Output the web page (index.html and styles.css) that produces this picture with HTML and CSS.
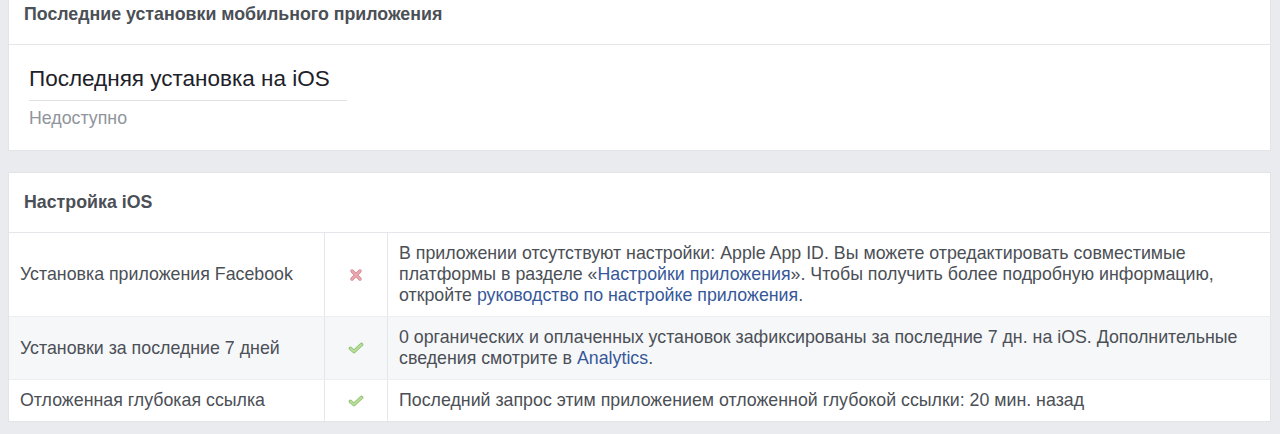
FILE: index.html
```html
<!DOCTYPE html>
<html lang="ru">
<head>
<meta charset="utf-8">
<link rel="stylesheet" href="styles.css">
</head>
<body>
<section class="card card-top">
  <div class="card-head card-head-top">Последние установки мобильного приложения</div>
  <div class="card-body">
    <div class="stat-title">Последняя установка на iOS</div>
    <div class="stat-value">Недоступно</div>
  </div>
</section>

<section class="card card-ios">
  <div class="card-head">Настройка iOS</div>
  <div class="grid">
    <div class="row">
      <div class="cell name">Установка приложения Facebook</div>
      <div class="cell icon">
        <svg width="14" height="14" viewBox="0 0 14 14"><path d="M3 3 L11 11 M11 3 L3 11" stroke="#d4848e" stroke-width="3.4" stroke-linecap="round"/><path d="M3 3 L11 11 M11 3 L3 11" stroke="#eaa9b1" stroke-width="1.8" stroke-linecap="round"/></svg>
      </div>
      <div class="cell desc">В приложении отсутствуют настройки: Apple App ID. Вы можете отредактировать совместимые платформы в разделе «<a href="#">Настройки приложения</a>». Чтобы получить более подробную информацию, откройте <a href="#">руководство по настройке приложения</a>.</div>
    </div>
    <div class="row alt">
      <div class="cell name">Установки за последние 7 дней</div>
      <div class="cell icon">
        <svg width="16" height="14" viewBox="0 0 16 14"><path d="M2.5 7.5 L6 10.5 L13.5 3.5" fill="none" stroke="#8fbf6e" stroke-width="3.6" stroke-linecap="round" stroke-linejoin="round"/><path d="M2.5 7.5 L6 10.5 L13.5 3.5" fill="none" stroke="#b8e09a" stroke-width="1.8" stroke-linecap="round" stroke-linejoin="round"/></svg>
      </div>
      <div class="cell desc">0 органических и оплаченных установок зафиксированы за последние 7 дн. на iOS. Дополнительные сведения смотрите в <a href="#">Analytics</a>.</div>
    </div>
    <div class="row">
      <div class="cell name">Отложенная глубокая ссылка</div>
      <div class="cell icon">
        <svg width="16" height="14" viewBox="0 0 16 14"><path d="M2.5 7.5 L6 10.5 L13.5 3.5" fill="none" stroke="#8fbf6e" stroke-width="3.6" stroke-linecap="round" stroke-linejoin="round"/><path d="M2.5 7.5 L6 10.5 L13.5 3.5" fill="none" stroke="#b8e09a" stroke-width="1.8" stroke-linecap="round" stroke-linejoin="round"/></svg>
      </div>
      <div class="cell desc">Последний запрос этим приложением отложенной глубокой ссылки: 20 мин. назад</div>
    </div>
  </div>
</section>
</body>
</html>
```

FILE: styles.css
```css
html, body {
  margin: 0;
  padding: 0;
}
body {
  background: #e9ebee;
  padding: 0 9px 0 8px;
  font-family: "Liberation Sans", Arial, sans-serif;
  color: #4b4f56;
  font-size: 17.8px;
  height: 434px;
  overflow: hidden;
}
.card {
  background: #fff;
  border: 1px solid #e2e4e8;
  border-top: none;
}
.card-ios {
  margin-top: 21px;
  border-top: 1px solid #e2e4e8;
}
.card-head {
  font-weight: bold;
  font-size: 17.8px;
  line-height: 20px;
  padding: 19px 15px 20px;
  border-bottom: 1px solid #e5e6e9;
  color: #4b4f56;
}
.card-head-top {
  padding-top: 4px;
  padding-bottom: 20px;
}
.card-body {
  padding: 22px 20px 22px;
}
.stat-title {
  display: inline-block;
  font-size: 22.5px;
  line-height: 24px;
  color: #1d2129;
  padding-bottom: 9px;
  border-bottom: 1px solid #dddfe2;
  width: 318px;
}
.stat-value {
  color: #90949c;
  font-size: 17.8px;
  line-height: 20px;
  margin-top: 7px;
}
.grid {
  display: flex;
  flex-direction: column;
}
.row {
  display: grid;
  grid-template-columns: 316px 63px 1fr;
  border-bottom: 1px solid #eceef1;
}
.row:last-child {
  border-bottom: none;
}
.row.alt {
  background: #f6f7f9;
}
.cell {
  padding: 10px 11px;
  line-height: 21px;
  display: flex;
  align-items: center;
}
.cell.name {
  border-right: 1px solid #e5e6e9;
}
.cell.icon {
  justify-content: center;
  border-right: 1px solid #e5e6e9;
}
.cell.desc {
  display: block;
  padding-right: 30px;
}
a {
  color: #365899;
  text-decoration: none;
}
```
